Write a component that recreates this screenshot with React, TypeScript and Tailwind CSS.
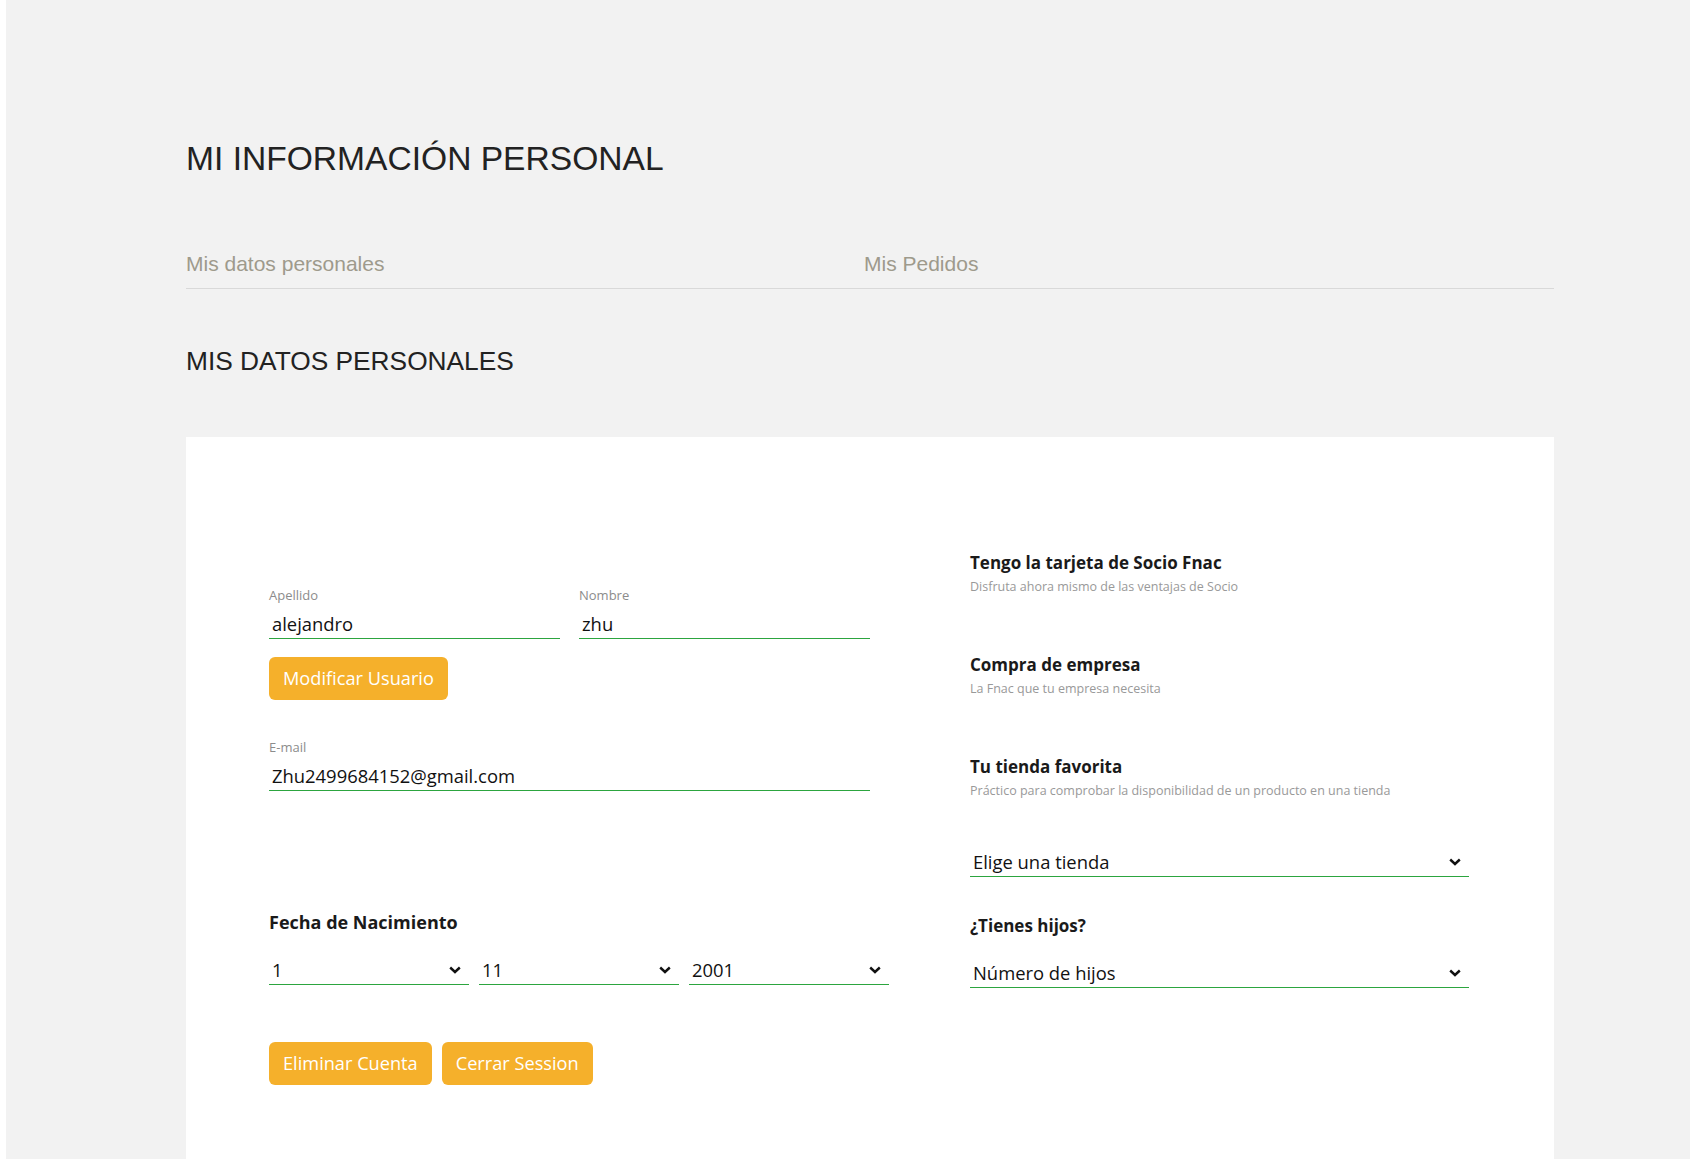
import { useState } from 'react';

const formFont = { fontFamily: '"Open Sans", "Noto Sans", sans-serif' };

function Chevron() {
  return (
    <svg width="12" height="8" viewBox="0 0 12 8" className="pointer-events-none absolute right-[8px] top-[11px]">
      <polyline points="1.2,1.5 6,6 10.8,1.5" fill="none" stroke="#111" strokeWidth="2.4" />
    </svg>
  );
}

function Field({ label, value, width, className = '' }: { label: string; value: string; width: string; className?: string }) {
  const [val, setVal] = useState(value);
  return (
    <div className={`${width} ${className}`}>
      <label className="block text-[13px] leading-[16px] text-[#8c8c8c]">{label}</label>
      <input
        value={val}
        onChange={(e) => setVal(e.target.value)}
        className="mt-[6px] block h-[30px] w-full border-b border-[#2ca53f] pl-[3px] text-[18.4px] text-[#111] outline-none"
      />
    </div>
  );
}

function Select({ options, width, className = '' }: { options: string[]; width: string; className?: string }) {
  return (
    <div className={`relative ${width} ${className}`}>
      <select className="block h-[30px] w-full appearance-none border-b border-[#2ca53f] bg-white pl-[3px] text-[18.4px] text-[#111] outline-none">
        {options.map((o) => (
          <option key={o}>{o}</option>
        ))}
      </select>
      <Chevron />
    </div>
  );
}

function YellowButton({ children }: { children: string }) {
  return (
    <button className="h-[43px] rounded-[6px] bg-[#f5b02b] px-[14px] text-[18.2px] text-white">
      {children}
    </button>
  );
}

export default function App() {
  const info = [
    { title: 'Tengo la tarjeta de Socio Fnac', sub: 'Disfruta ahora mismo de las ventajas de Socio' },
    { title: 'Compra de empresa', sub: 'La Fnac que tu empresa necesita' },
    { title: 'Tu tienda favorita', sub: 'Práctico para comprobar la disponibilidad de un producto en una tienda' },
  ];

  return (
    <div className="flex min-h-screen bg-white">
      <div className="w-[6px] shrink-0 bg-white" />
      <div className="flex-1 bg-[#f2f2f2] pl-[180px] pt-[139px]" style={{ fontFamily: '"Liberation Sans", Arial, sans-serif' }}>
        <div className="w-[1368px]">
          {/* Header */}
          <h1 className="text-[33.6px] leading-[40px] text-[#222]">MI INFORMACIÓN PERSONAL</h1>

          {/* Tabs */}
          <div className="mt-[73px] flex border-b border-[#d9d9d9] pb-[12px] text-[21px] leading-[24px] text-[#9e9a8c]">
            <div className="w-[678px]">Mis datos personales</div>
            <div>Mis Pedidos</div>
          </div>

          <h2 className="mt-[56px] text-[26.3px] leading-[32px] text-[#222]">MIS DATOS PERSONALES</h2>

          {/* Card */}
          <div className="mt-[60px] flex bg-white pb-[120px] pl-[83px]" style={formFont}>
            {/* Left column */}
            <div className="w-[701px] pt-[150px]">
              <div className="flex gap-[19px]">
                <Field label="Apellido" value="alejandro" width="w-[291px]" />
                <Field label="Nombre" value="zhu" width="w-[291px]" />
              </div>
              <div className="mt-[18px]">
                <YellowButton>Modificar Usuario</YellowButton>
              </div>
              <Field label="E-mail" value="Zhu2499684152@gmail.com" width="w-[601px]" className="mt-[39px]" />

              <div className="mt-[119px] text-[18px] font-bold leading-[24px] text-[#1a1a1a]">Fecha de Nacimiento</div>
              <div className="mt-[21px] flex gap-[10px]">
                <Select options={['1']} width="w-[200px]" />
                <Select options={['11']} width="w-[200px]" />
                <Select options={['2001']} width="w-[200px]" />
              </div>

              <div className="mt-[57px] flex gap-[10px]">
                <YellowButton>Eliminar Cuenta</YellowButton>
                <YellowButton>Cerrar Session</YellowButton>
              </div>
            </div>

            {/* Right column */}
            <div className="w-[499px] pt-[114px]">
              {info.map((item, i) => (
                <div key={item.title} className={i === 0 ? '' : 'mt-[58px]'}>
                  <div className="text-[17px] font-bold leading-[24px] text-[#1a1a1a]">{item.title}</div>
                  <div className="mt-[4px] text-[12.5px] leading-[16px] text-[#999]">{item.sub}</div>
                </div>
              ))}
              <Select options={['Elige una tienda']} width="w-[499px]" className="mt-[48px]" />
              <div className="mt-[37px] text-[17px] font-bold leading-[24px] text-[#1a1a1a]">¿Tienes hijos?</div>
              <Select options={['Número de hijos']} width="w-[499px]" className="mt-[20px]" />
            </div>
          </div>
        </div>
      </div>
    </div>
  );
}
